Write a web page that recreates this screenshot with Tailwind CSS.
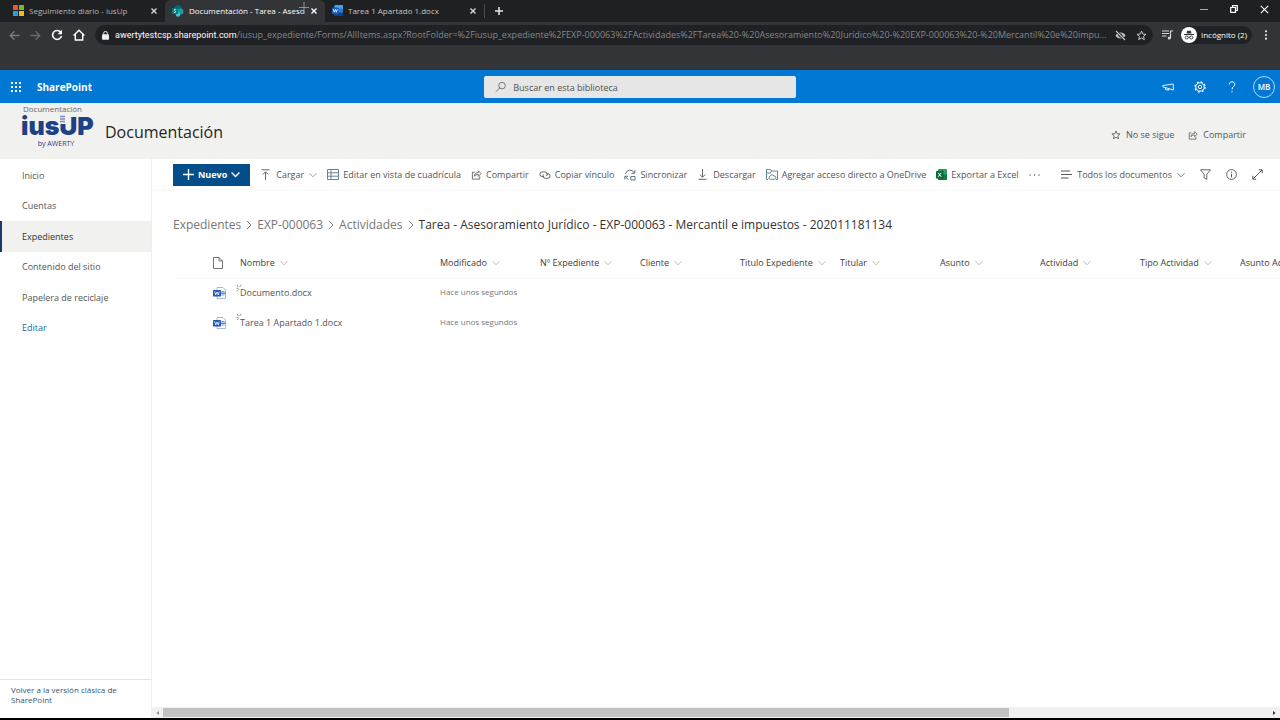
<!DOCTYPE html>
<html lang="es">
<head>
<meta charset="utf-8">
<meta name="viewport" content="width=device-width, initial-scale=1">
<title>Documentación - SharePoint</title>
<script src="https://cdn.jsdelivr.net/npm/@tailwindcss/browser@4"></script>
</head>
<body class="flex h-screen flex-col overflow-hidden bg-white font-['Open_Sans','Noto_Sans',sans-serif] text-[9px] leading-3 text-[#555555]">
<svg class="hidden">
  <symbol id="chev" viewBox="0 0 8 8"><path d="M.5 2.200 4 5.800 7.500 2.200" fill="none" stroke="currentColor" stroke-width=".8"/></symbol>
  <symbol id="crumb" viewBox="0 0 8 10"><path d="M2 1l4 4-4 4" fill="none" stroke="currentColor" stroke-width=".9"/></symbol>
  <symbol id="x" viewBox="0 0 8 8"><path d="M1.500 1.500l5 5m0-5l-5 5" fill="none" stroke="currentColor" stroke-width="1.400"/></symbol>
  <symbol id="share" viewBox="0 0 12 12"><path d="M4 3.500H1.500V11h8V8M3.500 8c.3-2.600 1.800-4 4.500-4V2l3 3-3 3V6C6 6 4.500 6.600 3.500 8z" fill="none" stroke="currentColor" stroke-width=".9"/></symbol>
  <symbol id="star" viewBox="0 0 12 12"><path d="M6 1.200l1.400 3.200 3.500.3-2.700 2.300.9 3.500L6 8.700 2.900 10.500l.9-3.500L1.100 4.700l3.500-.3z" fill="none" stroke="currentColor"/></symbol>
  <symbol id="word" viewBox="0 0 13 12"><path d="M4 .5h6l2.500 2.500v8.500H4z" fill="#fff" stroke="#8a9bb5" stroke-width=".7"/><path d="M8.500 4.500h3M8.500 8h3" stroke="#6f9fd8"/><path d="M8 6.200h4.500" stroke="#2b7cd3" stroke-width="1.300"/><rect y="3" width="8" height="6.500" rx=".6" fill="#2358b5"/><path d="M1.700 4.500l1 3.500L4 5l1.300 3 1-3.500" fill="none" stroke="#fff" stroke-width=".8"/></symbol>
  <symbol id="new" viewBox="0 0 6 8"><path d="M1.200 1l.8 1.800M5.200 .8L3.600 3M.5 4.300h2M1 7.200l2-2" fill="none" stroke="#777" stroke-width=".8"/></symbol>
</svg>

<header class="shrink-0 bg-[#323438] text-[#d6d7d8]">
  <div class="flex h-[22px] items-stretch bg-[#1f2022] text-[8px]">
    <div class="flex w-[165px] items-center pr-[7px] pb-px pl-[13px]">
      <svg class="mr-[5px] size-[11px]" viewBox="0 0 11 11"><path d="M0 0h5v5H0z" fill="#e8582b"/><path d="M6 0h5v5H6z" fill="#7fb528"/><path d="M0 6h5v5H0z" fill="#2a9de0"/><path d="M6 6h5v5H6z" fill="#f7b61b"/></svg>
      <span class="grow text-[#b5b6b8]">Seguimiento diario - iusUp</span>
      <button aria-label="Cerrar pestaña"><svg class="size-2"><use href="#x"/></svg></button>
    </div>
    <div class="relative flex w-[160px] items-center rounded-t-md bg-[#323438] pr-[7px] pb-px pl-[7px]">
      <svg class="mr-[5px] size-3 shrink-0" viewBox="0 0 12 12"><circle cx="6" cy="4" r="3.800" fill="#036c70"/><circle cx="8.500" cy="6.500" r="3" fill="#1a9ba1"/><circle cx="6" cy="9.500" r="2.300" fill="#37c6d0"/><rect y="3" width="6" height="6" rx=".6" fill="#03787c"/><path d="M4.200 4.500c-2-.8-2.700.9-1.200 1.500s.7 2-1.200 1.400" fill="none" stroke="#fff" stroke-width=".8"/></svg>
      <span class="font-medium whitespace-nowrap text-white">Documentación - Tarea - Aseso</span>
      <button class="ml-auto text-white" aria-label="Cerrar pestaña"><svg class="size-2"><use href="#x"/></svg></button>
      <svg class="absolute top-[2px] left-[133px] size-[12px]" viewBox="0 0 12 12"><path d="M6 0v12M1 5.500h10" stroke="#a9a9a9" stroke-width=".8"/></svg>
    </div>
    <div class="flex w-[159px] items-center pr-[7px] pb-px pl-[7px]">
      <svg class="mr-[5px] size-[11px]" viewBox="0 0 11 11"><rect x="2.500" width="8.500" height="11" rx="1" fill="#2b7cd3"/><path d="M2.500 1q0-1 1-1H10q1 0 1 1v2.500H2.500z" fill="#41a5ee"/><path d="M2.500 7.500H11V10q0 1-1 1H3.500q-1 0-1-1z" fill="#103f91"/><rect y="2.500" width="6.500" height="6.500" rx=".6" fill="#185abd"/><path d="M1.300 4.200l.9 3 1.100-2.800 1.100 2.800.9-3" fill="none" stroke="#fff" stroke-width=".8"/></svg>
      <span class="grow text-[#c5c6c8]">Tarea 1 Apartado 1.docx</span>
      <button aria-label="Cerrar pestaña"><svg class="size-2"><use href="#x"/></svg></button>
    </div>
    <div class="h-[14px] w-px self-center bg-[#4b4c4f]"></div>
    <button class="ml-[9px]" aria-label="Nueva pestaña"><svg class="size-[10px]" viewBox="0 0 10 10"><path d="M5 1v8M1 5h8" stroke="#e8e8e8" stroke-width="1.500"/></svg></button>
    <div class="ml-auto flex items-center gap-[22px] pr-[11px] pb-1 text-white">
      <button aria-label="Minimizar"><svg class="size-2" viewBox="0 0 8 8"><path d="M0 4.500h8" stroke="#aaa"/></svg></button>
      <button aria-label="Restaurar"><svg class="size-2" viewBox="0 0 8 8"><path d="M.7 2.500h4.800v4.800H.7zM2.500 2.500V.7h4.800v4.800H5.500" fill="none" stroke="#fff" stroke-width="1.200"/></svg></button>
      <button aria-label="Cerrar"><svg class="size-[9px]" viewBox="0 0 8 8"><path d="M.7.7l6.600 6.600m0-6.600L.7 7.300" stroke="#fff"/></svg></button>
    </div>
  </div>
  <div class="flex h-12 items-start pt-[3px]">
    <div class="flex h-5 items-center gap-[10px] pr-[10px] pl-[9px]">
      <button aria-label="Atrás"><svg class="size-[11px]" viewBox="0 0 11 11"><path d="M10.500 5.500h-9M5.500 1.200L1.200 5.500l4.300 4.300" fill="none" stroke="#77797c" stroke-width="1.300"/></svg></button>
      <button aria-label="Adelante"><svg class="size-[11px]" viewBox="0 0 11 11"><path d="M.5 5.500h9M5.500 1.200l4.300 4.300-4.300 4.300" fill="none" stroke="#66686b" stroke-width="1.300"/></svg></button>
      <button aria-label="Recargar"><svg class="size-[12px]" viewBox="0 0 12 12"><path d="M9.800 3.300A4.500 4.500 0 1 0 10.500 7" fill="none" stroke="#fff" stroke-width="1.500"/><path d="M11 .8v4.400H6.600z" fill="#fff"/></svg></button>
      <button aria-label="Inicio"><svg class="size-[12px]" viewBox="0 0 12 12"><path d="M.6 6.500L6 1.200l5.400 5.300M2.300 5.500V11h7.400V5.500" fill="none" stroke="#fff" stroke-width="1.400"/></svg></button>
    </div>
    <div class="flex h-5 min-w-0 grow items-center rounded-full bg-[#1f2124] pr-[6px] pl-[7px]">
      <svg class="mr-[6px] h-[9px] w-[7px] shrink-0" viewBox="0 0 7 9"><rect y="3.200" width="7" height="5.600" rx=".7" fill="#eee"/><path d="M1.700 3.500V2.200a1.800 1.800 0 0 1 3.600 0v1.300" fill="none" stroke="#eee"/></svg>
      <span class="grow truncate text-[#85888b]"><span class="font-['Roboto',sans-serif] text-white">awertytestcsp.sharepoint.com</span>/iusup_expediente/Forms/AllItems.aspx?RootFolder=%2Fiusup_expediente%2FEXP-000063%2FActividades%2FTarea%20-%20Asesoramiento%20Jurídico%20-%20EXP-000063%20-%20Mercantil%20e%20impue...</span>
      <svg class="ml-1 size-[11px] shrink-0" viewBox="0 0 11 11"><path d="M.5 5.500C2.500 1.500 8.500 1.500 10.500 5.500 8.500 9.500 2.500 9.500.5 5.500z" fill="#c9cacc"/><circle cx="5.500" cy="5.500" r="2" fill="#1f2124"/><circle cx="5.500" cy="5.500" r="1" fill="#c9cacc"/><path d="M1 1l9 9" stroke="#1f2124" stroke-width="2.500"/><path d="M1 1l9 9" stroke="#c9cacc" stroke-width="1.100"/></svg>
      <button class="ml-[10px] text-[#d6d7d8]" aria-label="Marcador"><svg class="size-[11px]"><use href="#star"/></svg></button>
    </div>
    <div class="flex h-5 shrink-0 items-center pr-[10px] pl-[9px]">
      <svg class="mr-[8px] h-[10px] w-[11px]" viewBox="0 0 11 10"><path d="M0 1h7M0 3.500h7M0 6h4.500M8.500 8V1H11" fill="none" stroke="#d6d7d8" stroke-width="1.200"/><circle cx="7.300" cy="8" r="1.600" fill="#d6d7d8"/></svg>
      <button class="mr-[10px] flex h-[18px] items-center gap-1 rounded-full bg-[#1f2124] pr-[5px] text-[8px] font-medium whitespace-nowrap text-white">
        <svg class="size-4" viewBox="0 0 16 16"><circle cx="8" cy="8" r="8" fill="#fff"/><path d="M5.500 6.500l.8-3 1.700.5 1.700-.5.8 3z" fill="#303236"/><path d="M3 7.500h10" stroke="#303236"/><circle cx="5.700" cy="10.500" r="1.500" fill="none" stroke="#303236" stroke-width=".9"/><circle cx="10.300" cy="10.500" r="1.500" fill="none" stroke="#303236" stroke-width=".9"/><path d="M7 10.200h2" stroke="#303236" stroke-width=".8"/></svg>
        Incógnito (2)
      </button>
      <button aria-label="Menú"><svg class="h-[10px] w-[8px]" viewBox="0 0 8 10"><g fill="#e8e8e8"><circle cx="4" cy="1.300" r="1.100"/><circle cx="4" cy="5" r="1.100"/><circle cx="4" cy="8.700" r="1.100"/></g></svg></button>
    </div>
  </div>
</header>

<div class="grid h-[33px] shrink-0 grid-cols-[1fr_312px_1fr] items-center bg-[#0078d4] text-white">
  <div class="flex items-center gap-4 pl-[11px]">
    <button aria-label="Iniciador de aplicaciones"><svg class="size-[10px]" viewBox="0 0 10 10"><path d="M0 1h10M0 5h10M0 9h10" stroke="#fff" stroke-width="2" stroke-dasharray="2 2"/></svg></button>
    <a href="#" class="text-[10px] font-bold leading-4">SharePoint</a>
  </div>
  <label class="flex h-[22px] items-center gap-[7px] rounded-xs bg-[#e6e6e6] pl-[11px]">
    <svg class="size-[12px]" viewBox="0 0 12 12"><circle cx="7.500" cy="4.500" r="3.500" fill="none" stroke="#666" stroke-width=".9"/><path d="M5 7L1 11" stroke="#666" stroke-width=".9"/></svg>
    <input type="search" aria-label="Buscar en esta biblioteca" placeholder="Buscar en esta biblioteca" class="w-full bg-transparent pt-[2px] text-[9px] outline-none placeholder:text-[#505050]">
  </label>
  <div class="flex items-center justify-end pr-[5px]">
    <button aria-label="Novedades" class="mr-[20px]"><svg class="size-3" viewBox="0 0 12 12"><path d="M11.300 3v6L.8 5.800V4.500zM3.500 6.800v1.800l3.300.5V8" fill="none" stroke="#fff" stroke-width=".9"/></svg></button>
    <button aria-label="Configuración" class="mr-[22px]"><svg class="size-3" viewBox="0 0 12 12"><circle cx="6" cy="6" r="4.200" fill="none" stroke="#fff"/><circle cx="6" cy="6" r="5.100" fill="none" stroke="#fff" stroke-width="1.200" stroke-dasharray="2 2"/><circle cx="6" cy="6" r="1.700" fill="none" stroke="#fff"/></svg></button>
    <button aria-label="Ayuda" class="mr-[17px]"><svg class="h-3 w-2" viewBox="0 0 8 12"><path d="M1.200 3.500C1.200 0 6.800 0 6.800 3.300 6.800 5.500 4 5.500 4 8.500M4 10v1.300" fill="none" stroke="#fff"/></svg></button>
    <button aria-label="Cuenta" class="size-[22px] rounded-full border border-[#b5d8f3] text-[8px] font-semibold">MB</button>
  </div>
</div>

<div class="flex h-14 shrink-0 items-center bg-[#f1f1f0]">
  <a href="#" class="ml-[21px] w-[84px] self-start text-[8px] leading-[11px] text-[#666]" aria-label="iusUP by Awerty">
    <span class="block pl-[2px]">Documentación</span>
    <span class="relative flex h-[25px] items-center font-['Inter','Open_Sans',sans-serif] text-[25px] font-black leading-[25px] text-[#1c4184]">iusUP
      <svg class="absolute top-0 left-[38px] h-[10px] w-[7px]" viewBox="0 0 7 10"><path d="M0 0h7v10H0z" fill="#f1f1f0"/><path d="M1 2.500h5M1 5h5M1 7.500h5" stroke="#7f8fb3" stroke-width="1.400"/></svg>
    </span>
    <span class="block w-[70px] text-center text-[7px] leading-[9px] text-[#1c4184]">by AWERTY</span>
  </a>
  <h1 class="pt-[2px] text-[16px] leading-6 text-[#252525]">Documentación</h1>
  <div class="ml-auto flex items-center gap-[14px] pt-[7px] pr-[34px]">
    <button class="flex items-center gap-[5px]"><svg class="size-[10px]"><use href="#star"/></svg>No se sigue</button>
    <button class="flex items-center gap-[5px]"><svg class="size-[10px]"><use href="#share"/></svg>Compartir</button>
  </div>
</div>

<div class="flex min-h-0 grow">
  <nav class="flex w-[152px] shrink-0 flex-col border-r border-[#efefef] pt-[2px]">
    <a href="#" class="flex h-[30px] items-center pl-[22px]">Inicio</a>
    <a href="#" class="flex h-[30px] items-center pl-[22px]">Cuentas</a>
    <a href="#" aria-current="page" class="flex h-[31px] items-center border-l-2 border-[#1b3a6b] bg-[#f1f1f0] pl-[20px] font-medium text-[#333]">Expedientes</a>
    <a href="#" class="flex h-[30px] items-center pl-[22px]">Contenido del sitio</a>
    <a href="#" class="flex h-[31px] items-center pl-[22px]">Papelera de reciclaje</a>
    <a href="#" class="flex h-[30px] items-center pl-[22px] text-[#25689f]">Editar</a>
    <a href="#" class="mt-auto border-t border-[#e3e3e3] pt-[5px] pr-6 pb-[13px] pl-[11px] text-[8px] leading-[10px] text-[#35566f]">Volver a la versión clásica de SharePoint</a>
  </nav>

  <main class="flex min-w-0 grow flex-col">
    <div class="flex h-8 shrink-0 items-center gap-[10px] border-b border-[#f9f9f9] pl-[21px] whitespace-nowrap">
      <button class="flex h-[22px] items-center gap-[4px] bg-[#034d89] px-[10px] font-bold text-white"><svg class="size-[11px]" viewBox="0 0 11 11"><path d="M5.500 0v11M0 5.500h11" stroke="#fff" stroke-width="1.400"/></svg>Nuevo<svg class="size-[9px]" viewBox="0 0 8 8"><path d="M.5 2.200 4 5.800 7.500 2.200" fill="none" stroke="#fff" stroke-width="1.300"/></svg></button>
      <button class="flex items-center gap-[5px]"><svg class="size-[11px]" viewBox="0 0 11 11"><path d="M1.500.8h8M5.500 11V3M2.800 5.500l2.700-2.700 2.700 2.700" fill="none" stroke="currentColor" stroke-width=".9"/></svg>Cargar<svg class="size-2 text-[#888]"><use href="#chev"/></svg></button>
      <button class="flex items-center gap-[4px]"><svg class="h-[11px] w-[12px]" viewBox="0 0 12 11"><path d="M.5.5h11v10H.5zM.5 3.800h11M.5 7.200h11M4 .5v10" fill="none" stroke="#56788c" stroke-width=".9"/></svg>Editar en vista de cuadrícula</button>
      <button class="flex items-center gap-[4px]"><svg class="size-[11px]"><use href="#share"/></svg>Compartir</button>
      <button class="flex items-center gap-[4px]"><svg class="h-[11px] w-[12px]" viewBox="0 0 12 11"><path d="M5 7.500H3.200a2.300 2.300 0 0 1 0-4.600H6a2.300 2.300 0 0 1 1.300 4.200M7 4.700h1.800a2.300 2.300 0 0 1 0 4.600H6.500A2.300 2.300 0 0 1 4.800 5.300" fill="none" stroke="currentColor" stroke-width=".9"/></svg>Copiar vínculo</button>
      <button class="flex items-center gap-[4px]"><svg class="size-[12px]" viewBox="0 0 12 12"><path d="M1.500 5A4.600 4.600 0 0 1 10.300 4M10.800 1v3.300H7.500M4.500 10.500A4.600 4.600 0 0 1 1.600 7.500M.8 10.500V7.300H4" fill="none" stroke="#4d6878" stroke-width=".9"/><path d="M6.800 7.500h4.200V11H6.800z" fill="none" stroke="#4d6878" stroke-width=".9"/></svg>Sincronizar</button>
      <button class="flex items-center gap-[5px]"><svg class="size-[11px]" viewBox="0 0 11 11"><path d="M1.500 10.300h8M5.500 0v8M2.800 5.500l2.700 2.700 2.700-2.700" fill="none" stroke="currentColor" stroke-width=".9"/></svg>Descargar</button>
      <button class="flex items-center gap-[4px]"><svg class="h-[11px] w-[12px]" viewBox="0 0 12 11"><path d="M2 10.500H.5V.5h4l1 1.500h6v8.500H10M.5 4h4l1-2" fill="none" stroke="#4d7f92" stroke-width=".9"/><path d="M4.500 10.300a1.500 1.500 0 0 1-.3-3 2 2 0 0 1 3.800-.2 1.600 1.600 0 0 1 .6 3.200z" fill="none" stroke="#4d7f92" stroke-width=".9"/></svg>Agregar acceso directo a OneDrive</button>
      <button class="flex items-center gap-[4px]"><svg class="size-[11px]" viewBox="0 0 11 11"><rect x="2" width="9" height="11" rx=".8" fill="#21a366"/><path d="M2 5.500h9V10q0 1-1 1H2z" fill="#107c41"/><path d="M6.500 0v11" stroke="#185c37" stroke-width=".6"/><rect y="2" width="7.500" height="7.500" rx=".6" fill="#0b6a38"/><path d="M2.200 3.800l3 4m0-4l-3 4" stroke="#fff"/></svg>Exportar a Excel</button>
      <button aria-label="Más"><svg class="h-1 w-[11px]" viewBox="0 0 11 4"><g fill="#555"><circle cx="1" cy="2" r=".7"/><circle cx="5.500" cy="2" r=".7"/><circle cx="10" cy="2" r=".7"/></g></svg></button>
      <div class="ml-auto flex items-center gap-[15px] pr-[17px]">
        <button class="flex items-center gap-[5px]"><svg class="size-[11px]" viewBox="0 0 11 11"><path d="M0 2h9M0 5.500h11M0 9h7.500" stroke="currentColor"/></svg>Todos los documentos<svg class="size-2"><use href="#chev"/></svg></button>
        <button aria-label="Filtros"><svg class="size-[11px]" viewBox="0 0 11 11"><path d="M.5.800h10L6.800 5.300v5L4.200 9V5.300z" fill="none" stroke="currentColor" stroke-width=".9"/></svg></button>
        <button aria-label="Detalles"><svg class="size-[11px]" viewBox="0 0 11 11"><circle cx="5.500" cy="5.500" r="4.900" fill="none" stroke="currentColor" stroke-width=".9"/><path d="M5.500 4.800v3.500M5.500 2.700v1" stroke="currentColor"/></svg></button>
        <button aria-label="Expandir"><svg class="size-[11px]" viewBox="0 0 11 11"><path d="M1 10l9-9M6.800.8h3.400v3.400M.8 6.800v3.400h3.400" fill="none" stroke="currentColor"/></svg></button>
      </div>
    </div>

    <nav aria-label="Ruta" class="mt-[25px] flex h-[18px] shrink-0 items-center gap-1 pl-[21px] text-[12px] leading-4 whitespace-nowrap text-[#777]">
      <a href="#">Expedientes</a><svg class="h-[10px] w-2"><use href="#crumb"/></svg>
      <a href="#">EXP-000063</a><svg class="h-[10px] w-2"><use href="#crumb"/></svg>
      <a href="#">Actividades</a><svg class="h-[10px] w-2"><use href="#crumb"/></svg>
      <span class="text-[#333]">Tarea - Asesoramiento Jurídico - EXP-000063 - Mercantil e impuestos - 202011181134</span>
    </nav>

    <div class="mt-[14px] grow overflow-hidden pl-[21px]">
      <table class="w-[1167px] table-fixed border-collapse text-left whitespace-nowrap">
        <colgroup><col class="w-[67px]"><col class="w-[200px]"><col class="w-[100px]"><col class="w-[100px]"><col class="w-[100px]"><col class="w-[100px]"><col class="w-[100px]"><col class="w-[100px]"><col class="w-[100px]"><col class="w-[100px]"><col class="w-[100px]"></colgroup>
        <thead>
          <tr class="h-[30px] border-b border-[#f9f9f9] text-[#404040]">
            <th class="p-0 pl-[40px]"><svg class="h-[12px] w-[10px]" viewBox="0 0 10 12"><path d="M.5.5h5.500L9.500 4v7.500h-9zM6 .5V4h3.500" fill="none" stroke="#666" stroke-width=".9"/></svg></th>
            <th class="p-0 font-medium"><button class="flex items-center gap-[5px]">Nombre<svg class="size-2 text-[#aaa]"><use href="#chev"/></svg></button></th>
            <th class="p-0 font-medium"><button class="flex items-center gap-[5px]">Modificado<svg class="size-2 text-[#aaa]"><use href="#chev"/></svg></button></th>
            <th class="p-0 font-medium"><button class="flex items-center gap-[5px]">Nº Expediente<svg class="size-2 text-[#aaa]"><use href="#chev"/></svg></button></th>
            <th class="p-0 font-medium"><button class="flex items-center gap-[5px]">Cliente<svg class="size-2 text-[#aaa]"><use href="#chev"/></svg></button></th>
            <th class="p-0 font-medium"><button class="flex items-center gap-[5px]">Titulo Expediente<svg class="size-2 text-[#aaa]"><use href="#chev"/></svg></button></th>
            <th class="p-0 font-medium"><button class="flex items-center gap-[5px]">Titular<svg class="size-2 text-[#aaa]"><use href="#chev"/></svg></button></th>
            <th class="p-0 font-medium"><button class="flex items-center gap-[5px]">Asunto<svg class="size-2 text-[#aaa]"><use href="#chev"/></svg></button></th>
            <th class="p-0 font-medium"><button class="flex items-center gap-[5px]">Actividad<svg class="size-2 text-[#aaa]"><use href="#chev"/></svg></button></th>
            <th class="p-0 font-medium"><button class="flex items-center gap-[5px]">Tipo Actividad<svg class="size-2 text-[#aaa]"><use href="#chev"/></svg></button></th>
            <th class="p-0 font-medium"><button class="flex items-center gap-[5px]">Asunto Actividad<svg class="size-2 text-[#aaa]"><use href="#chev"/></svg></button></th>
          </tr>
        </thead>
        <tbody>
          <tr class="h-[30px]">
            <td class="p-0 pl-[40px]"><svg class="h-[12px] w-[13px]"><use href="#word"/></svg></td>
            <td class="relative p-0"><svg class="absolute top-[5px] -left-1 h-2 w-[6px]"><use href="#new"/></svg><a href="#">Documento.docx</a></td>
            <td class="p-0 pb-[2px] text-[8px] text-[#777]">Hace unos segundos</td><td></td><td></td><td></td><td></td><td></td><td></td><td></td><td></td>
          </tr>
          <tr class="h-[30px]">
            <td class="p-0 pl-[40px]"><svg class="h-[12px] w-[13px]"><use href="#word"/></svg></td>
            <td class="relative p-0"><svg class="absolute top-[5px] -left-1 h-2 w-[6px]"><use href="#new"/></svg><a href="#">Tarea 1 Apartado 1.docx</a></td>
            <td class="p-0 pb-[2px] text-[8px] text-[#777]">Hace unos segundos</td><td></td><td></td><td></td><td></td><td></td><td></td><td></td><td></td>
          </tr>
        </tbody>
      </table>
    </div>

    <div class="flex h-[11px] shrink-0 items-center bg-[#f1f1f1]" aria-hidden="true">
      <svg class="mr-[3px] ml-1 size-1" viewBox="0 0 4 4"><path d="M3 0v4L.5 2z" fill="#888"/></svg>
      <div class="h-[9px] grow"><div class="h-full w-13/17 bg-[#c1c1c1]"></div></div>
      <svg class="mr-1 ml-[3px] size-1" viewBox="0 0 4 4"><path d="M1 0v4l2.500-2z" fill="#333"/></svg>
    </div>
  </main>
</div>
<div class="h-[2px] shrink-0 bg-black"></div>
</body>
</html>
